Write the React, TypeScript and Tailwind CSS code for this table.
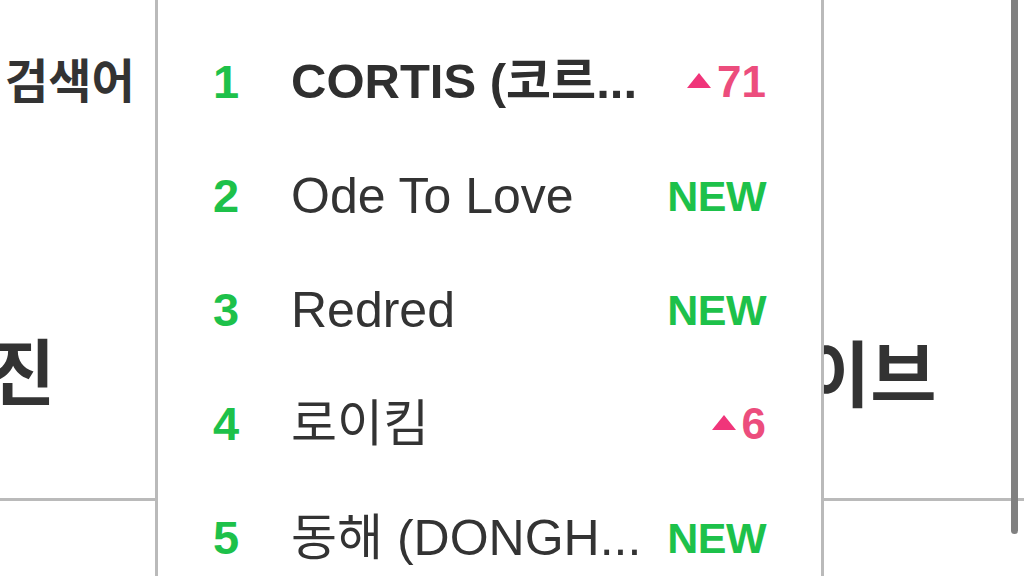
import React from 'react';

type Rank = {
  no: number;
  title: string;
  bold?: boolean;
  up?: number;
};

const ranks: Rank[] = [
  { no: 1, title: 'CORTIS (코르...', bold: true, up: 71 },
  { no: 2, title: 'Ode To Love' },
  { no: 3, title: 'Redred' },
  { no: 4, title: '로이킴', up: 6 },
  { no: 5, title: '동해 (DONGH...' },
];

const Badge: React.FC<{ up?: number }> = ({ up }) => {
  if (up === undefined) {
    return <span className="text-[43px] font-bold text-[#1dc14a] tracking-[-0.5px]">NEW</span>;
  }
  return (
    <span className="flex items-center gap-[6px] text-[44px] font-semibold text-[#ec4d7d]">
      <svg width="24" height="15" viewBox="0 0 24 15" className="mb-[3px]">
        <path d="M12 0 L24 15 L0 15 Z" fill="#f0357a" />
      </svg>
      {up}
    </span>
  );
};

export default function App() {
  return (
    <div
      className="relative w-[1024px] h-[576px] overflow-hidden bg-white text-[#333333]"
      style={{ fontFamily: '"Liberation Sans", "Noto Sans CJK KR", sans-serif' }}
    >
      {/* table behind the dropdown */}
      <div className="flex h-[501px]">
        <div className="w-[155px] border-b-[3px] border-[#bababa] flex flex-col">
          <span className="pl-[5px] pt-[54px] text-[47px] font-bold leading-[56px] whitespace-nowrap">검색어</span>
          <span className="mt-[222px] ml-[-11px] text-[72px] font-bold leading-[84px] whitespace-nowrap">진</span>
        </div>
        <div className="w-[669px]" />
        <div className="flex-1 border-b-[3px] border-[#bababa] flex flex-col">
          <span className="mt-[334px] ml-[-20px] text-[72px] font-bold leading-[84px] whitespace-nowrap">이브</span>
        </div>
      </div>

      {/* ranking dropdown */}
      <div className="absolute left-[155px] top-0 w-[669px] h-[576px] bg-white border-x-[3px] border-[#bababa] pt-[25px]">
        {ranks.map((r) => (
          <div key={r.no} className="h-[114px] flex items-center pl-[55px] pr-[55px]">
            <span className="w-[78px] text-[47px] font-bold text-[#1dc14a]">{r.no}</span>
            <span
              className={
                'flex-1 whitespace-nowrap overflow-hidden ' +
                (r.bold ? 'text-[49px] font-bold text-[#2f2f2f]' : 'text-[50px] font-normal text-[#333333]')
              }
            >
              {r.title}
            </span>
            <Badge up={r.up} />
          </div>
        ))}
      </div>

      {/* scrollbar */}
      <div className="absolute left-[1011px] top-0 w-[7px] h-[534px] rounded-b-full bg-[#808080]" />
    </div>
  );
}
